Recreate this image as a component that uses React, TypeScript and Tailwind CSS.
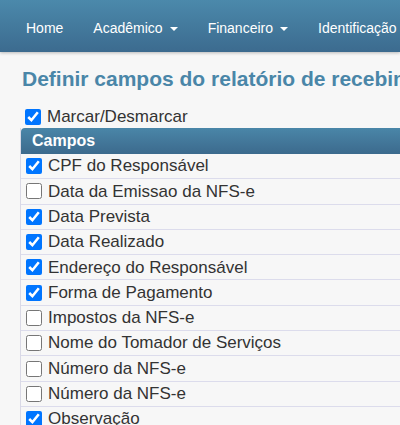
import { useState } from "react";

const fields: [string, boolean][] = [
  ["CPF do Responsável", true],
  ["Data da Emissao da NFS-e", false],
  ["Data Prevista", true],
  ["Data Realizado", true],
  ["Endereço do Responsável", true],
  ["Forma de Pagamento", true],
  ["Impostos da NFS-e", false],
  ["Nome do Tomador de Serviços", false],
  ["Número da NFS-e", false],
  ["Número da NFS-e", false],
  ["Observação", true],
  ["Valor", true],
];

function Caret() {
  return <span className="ml-[7px] inline-block h-0 w-0 border-x-[4px] border-t-[4px] border-x-transparent border-t-white align-middle" />;
}

export default function App() {
  const [checked, setChecked] = useState(fields.map((f) => f[1]));
  const [all, setAll] = useState(true);

  return (
    <div className="h-[425px] overflow-hidden bg-[#f7f7f7] font-['Liberation_Sans',Arial,sans-serif]">
      <nav className="flex h-[52px] items-center whitespace-nowrap bg-gradient-to-b from-[#4b89ab] to-[#3c6b8f] pl-[11px] pt-[5px] text-[14px] text-white shadow-[0_1px_3px_rgba(0,0,0,0.25)]">
        <a className="px-[15px]">Home</a>
        <a className="px-[15px]">
          Acadêmico
          <Caret />
        </a>
        <a className="px-[15px]">
          Financeiro
          <Caret />
        </a>
        <a className="px-[15px]">Identificação</a>
      </nav>

      <div className="pl-[20px]">
        <h1 className="mt-[14px] overflow-hidden whitespace-nowrap pl-[2px] text-[21px] font-bold leading-[25px] text-[#4a86a8]">
          Definir campos do relatório de recebimentos
        </h1>

        <label className="mt-[16px] flex h-[20px] items-center gap-[6px] pl-[5px] text-[17px] text-[#333]">
          <input
            type="checkbox"
            className="m-0 h-4 w-4 accent-[#0075ff]"
            checked={all}
            onChange={(e) => {
              setAll(e.target.checked);
              setChecked(checked.map(() => e.target.checked));
            }}
          />
          Marcar/Desmarcar
        </label>

        <div className="mt-[1px] w-[400px] border-l border-[#d9d9e6]">
          <div className="flex h-[26px] items-center rounded-tl-[4px] bg-gradient-to-b from-[#4a86a8] to-[#3c6a8d] pl-[11px] text-[16px] font-bold text-white">
            Campos
          </div>
          {fields.map(([name], i) => (
            <label
              key={i}
              className="flex h-[25.3px] items-center gap-[6px] border-b border-[#dcdcec] pl-[5px] text-[17px] text-[#333]"
            >
              <input
                type="checkbox"
                className="m-0 h-4 w-4 accent-[#0075ff]"
                checked={checked[i]}
                onChange={(e) => setChecked(checked.map((c, j) => (j === i ? e.target.checked : c)))}
              />
              {name}
            </label>
          ))}
        </div>
      </div>
    </div>
  );
}
